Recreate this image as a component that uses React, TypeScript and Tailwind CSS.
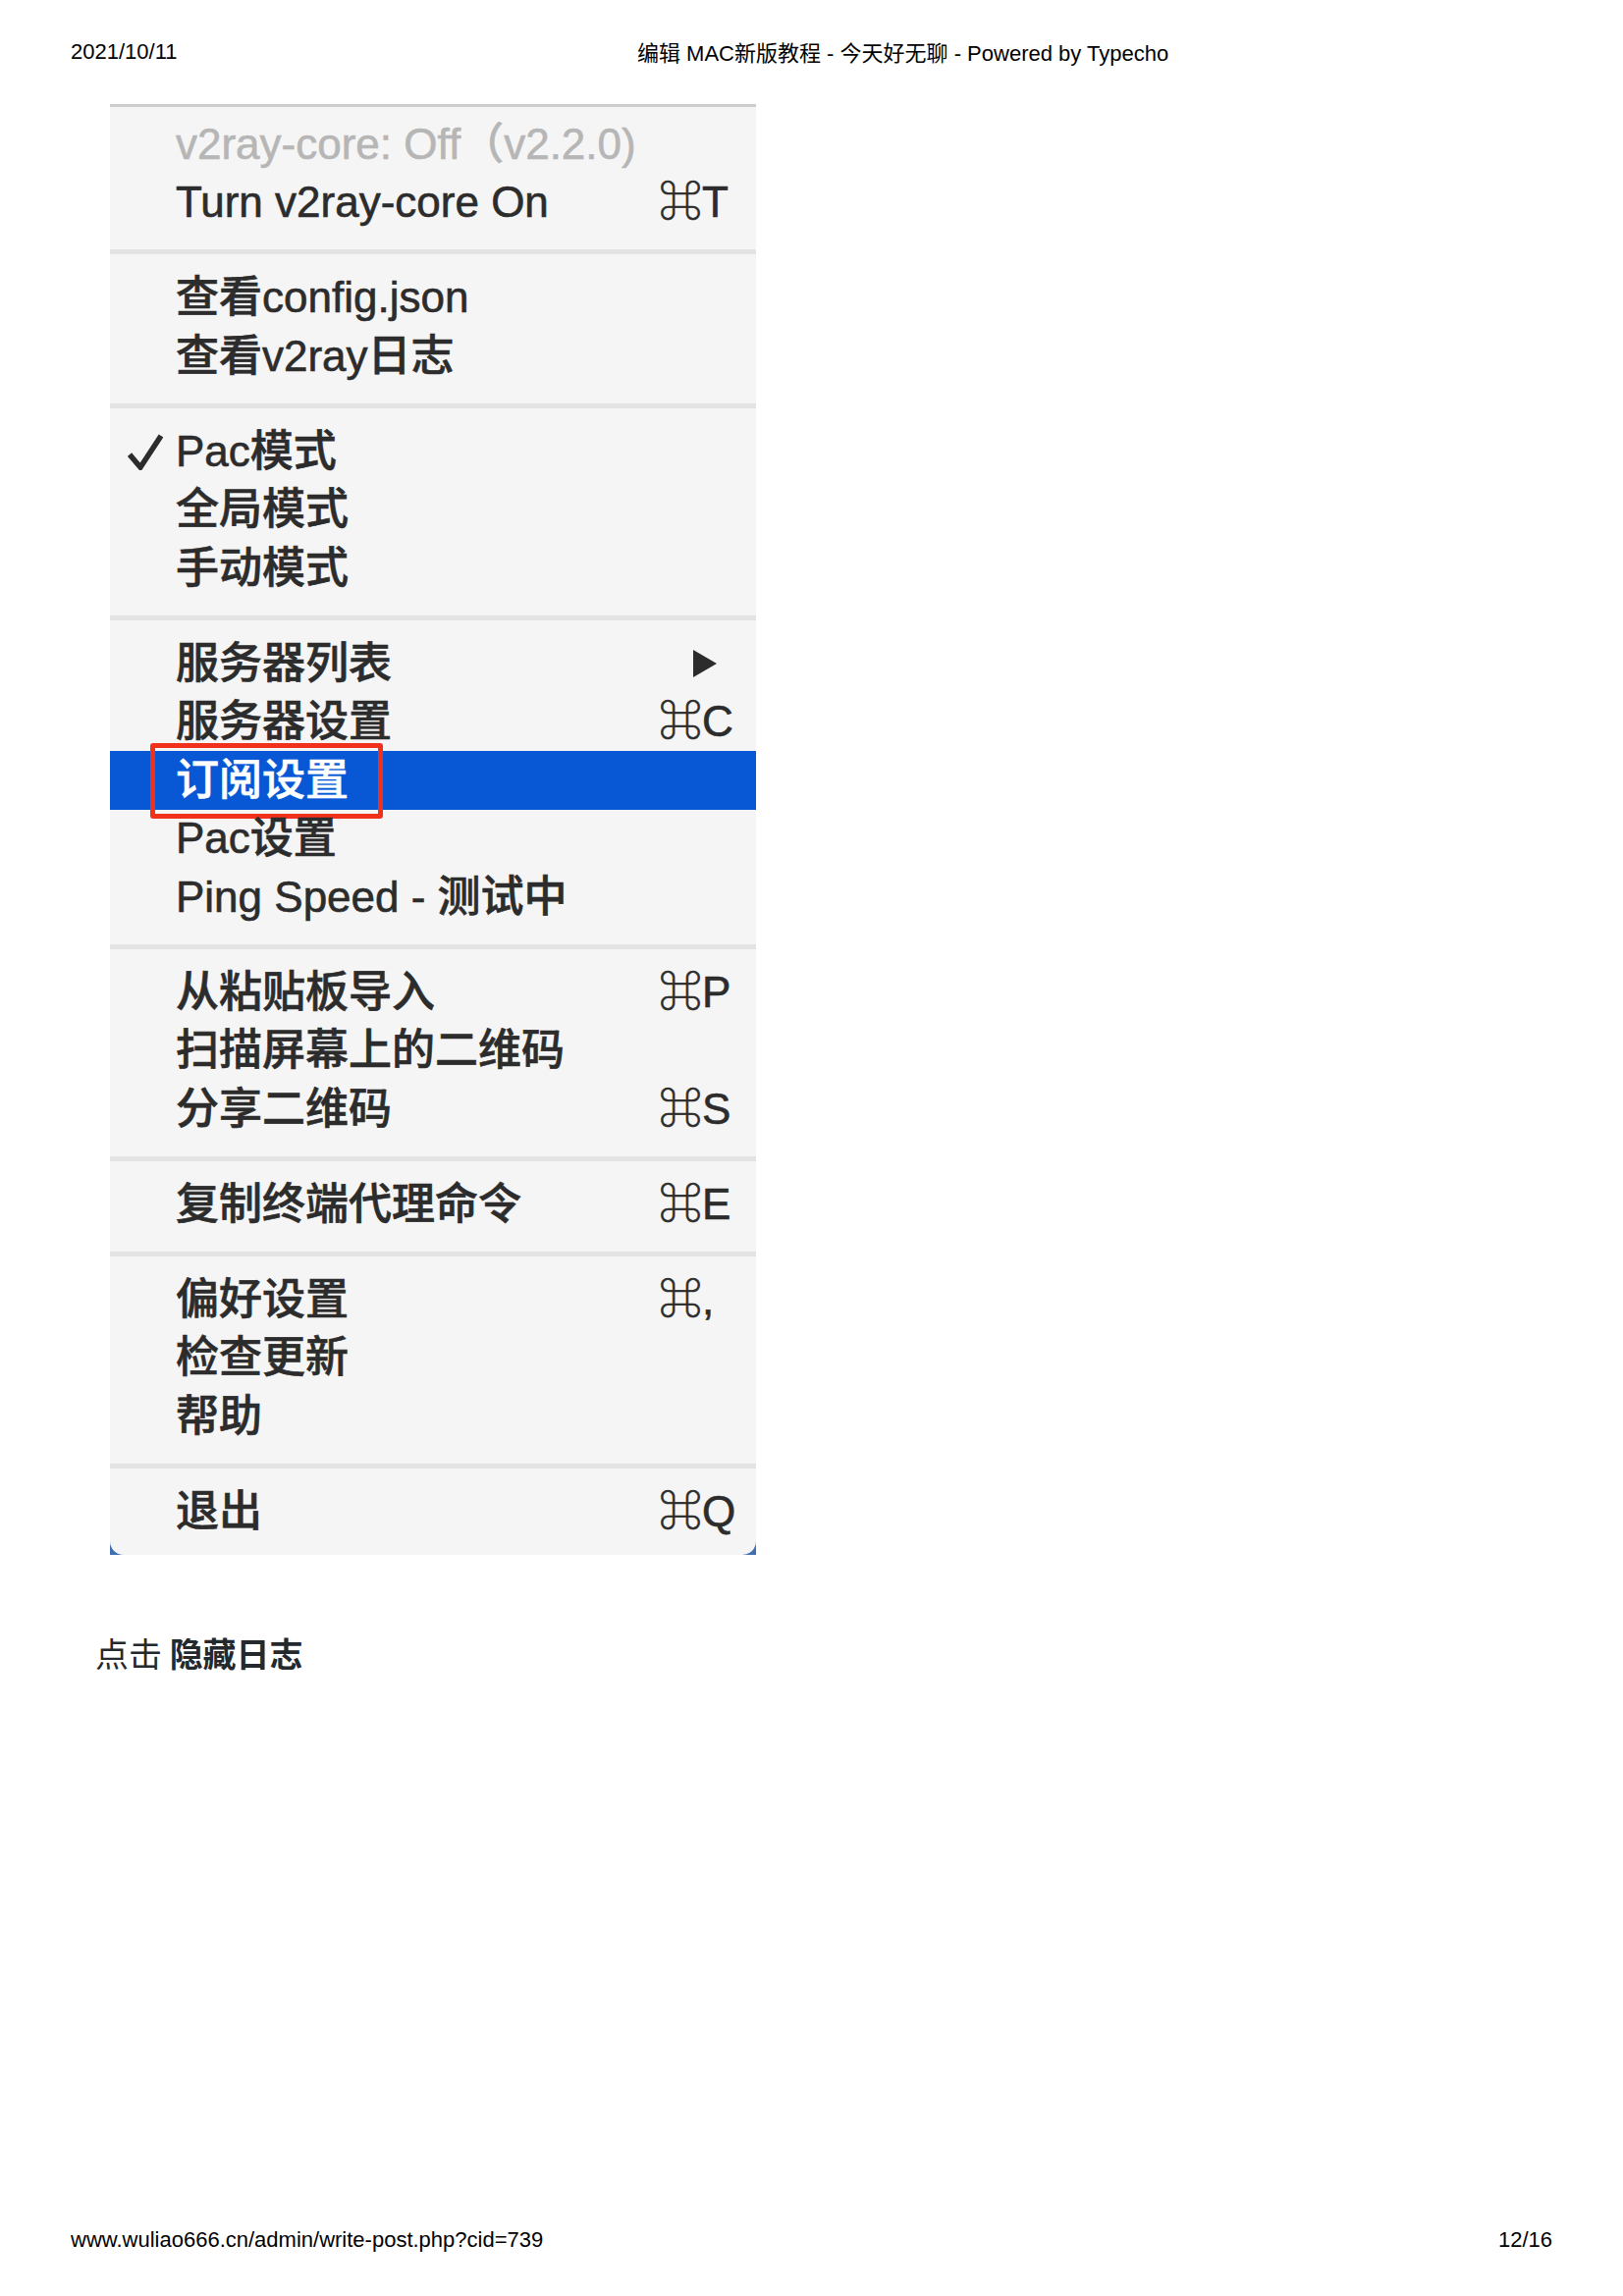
import React from 'react';

type Item = {
  label: string;
  shortcut?: string;
  disabled?: boolean;
  checked?: boolean;
  submenu?: boolean;
  active?: boolean;
};

const sections: Item[][] = [
  [
    { label: 'v2ray-core: Off（v2.2.0)', disabled: true },
    { label: 'Turn v2ray-core On', shortcut: '⌘T' },
  ],
  [{ label: '查看config.json' }, { label: '查看v2ray日志' }],
  [{ label: 'Pac模式', checked: true }, { label: '全局模式' }, { label: '手动模式' }],
  [
    { label: '服务器列表', submenu: true },
    { label: '服务器设置', shortcut: '⌘C' },
    { label: '订阅设置', active: true },
    { label: 'Pac设置' },
    { label: 'Ping Speed - 测试中' },
  ],
  [
    { label: '从粘贴板导入', shortcut: '⌘P' },
    { label: '扫描屏幕上的二维码' },
    { label: '分享二维码', shortcut: '⌘S' },
  ],
  [{ label: '复制终端代理命令', shortcut: '⌘E' }],
  [{ label: '偏好设置', shortcut: '⌘,' }, { label: '检查更新' }, { label: '帮助' }],
  [{ label: '退出', shortcut: '⌘Q' }],
];

const menuFont = { fontFamily: '"Liberation Sans", "Noto Sans CJK SC", sans-serif' };
const pageFont = { fontFamily: '"Liberation Sans", "Noto Sans CJK SC", sans-serif' };

const CheckMark = () => (
  <svg width="36" height="38" viewBox="0 0 36 38" className="block">
    <path d="M2 22 L13 35 L34 3" fill="none" stroke="#2c2c2c" strokeWidth="5.5" strokeLinejoin="miter" strokeLinecap="butt" />
  </svg>
);

const Arrow = () => (
  <svg width="26" height="30" viewBox="0 0 26 30" className="block">
    <polygon points="1,1 25,15 1,29" fill="#2c2c2c" />
  </svg>
);

const MenuRow = ({ item }: { item: Item }) => {
  const textColor = item.active ? 'text-white' : item.disabled ? 'text-[#b6b6b6]' : 'text-[#2c2c2c]';
  return (
    <div className={`relative flex h-[59.5px] items-center ${item.active ? 'bg-[#0858d6]' : ''}`}>
      <div className="flex w-[67px] items-center pl-[18px]">{item.checked && <CheckMark />}</div>
      <div className={`w-[492px] whitespace-nowrap text-[44px] leading-none ${textColor}`}>{item.label}</div>
      <div className="flex flex-1 items-center text-[44px] leading-none text-[#2c2c2c]">
        {item.shortcut && <span className="whitespace-nowrap">{item.shortcut}</span>}
        {item.submenu && (
          <span className="pl-[34px]">
            <Arrow />
          </span>
        )}
      </div>
      {item.active && (
        <div className="absolute left-[41px] top-[-8px] h-[77px] w-[237px] rounded-[3px] border-[5px] border-[#f2311d] [-webkit-text-stroke-width:0px]" />
      )}
    </div>
  );
};

export default function App() {
  return (
    <div className="relative flex h-[2339px] w-[1653px] flex-col bg-white text-black" style={pageFont}>
      <header className="flex pl-[72px] pt-[40px] text-[22px] leading-[26px]">
        <span className="w-[577px]">2021/10/11</span>
        <span className="pt-[2px]">编辑 MAC新版教程 - 今天好无聊 - Powered by Typecho</span>
      </header>

      <div className="ml-[112px] mt-[38px] w-[658px] bg-[#3f6fb0]">
        <div
          className="rounded-b-[14px] border-t-[3px] border-[#cdcdcd] bg-[#f5f5f5] pb-[14.5px] pt-[8px] font-medium [-webkit-text-stroke-width:0.6px]"
          style={menuFont}
        >
          {sections.map((section, i) => (
            <div key={i}>
              {i > 0 && (
                <div className="pb-[14.5px] pt-[18px]">
                  <div className="h-[5px] bg-[#e3e3e3]" />
                </div>
              )}
              {section.map((item) => (
                <MenuRow key={item.label} item={item} />
              ))}
            </div>
          ))}
        </div>
      </div>

      <p className="ml-[97px] mt-[80px] text-[34px] leading-[40px] text-[#24292e]" style={{ fontFamily: '"Noto Sans CJK SC", sans-serif' }}>
        点击 <strong className="font-bold">隐藏日志</strong>
      </p>

      <footer className="mt-auto flex justify-between pb-[44px] pl-[72px] pr-[72px] text-[22px] leading-[26px]">
        <span>www.wuliao666.cn/admin/write-post.php?cid=739</span>
        <span>12/16</span>
      </footer>
    </div>
  );
}
